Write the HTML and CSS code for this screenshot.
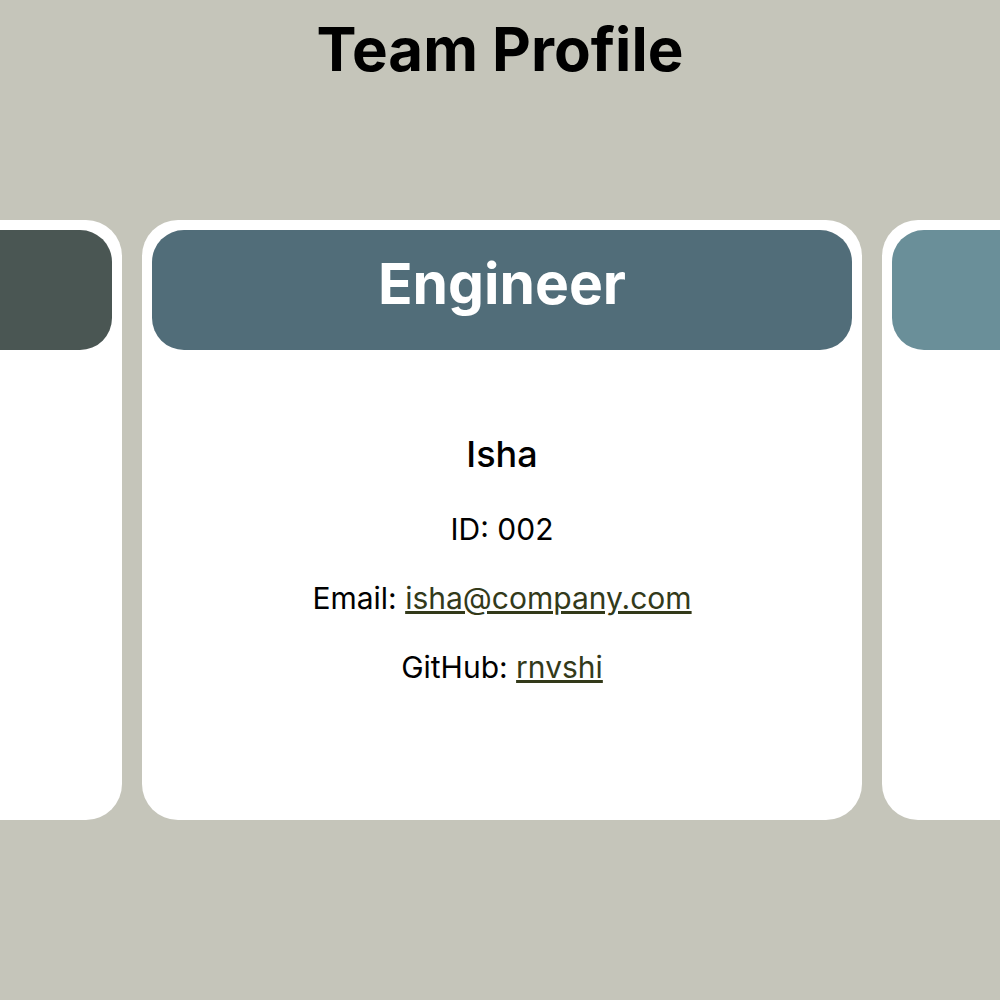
FILE: index.html
```html
<!DOCTYPE html>
<html lang="en">
<head>
<meta charset="utf-8">
<title>Team Profile</title>
<link rel="stylesheet" href="styles.css">
</head>
<body>
<h1 class="page-title">Team Profile</h1>
<div class="carousel">
  <div class="card">
    <div class="card-head head-manager"></div>
    <div class="card-body"></div>
  </div>
  <div class="card">
    <div class="card-head head-engineer"><h2 class="role">Engineer</h2></div>
    <div class="card-body">
      <h3 class="name">Isha</h3>
      <p class="line">ID: 002</p>
      <p class="line">Email: <a href="mailto:isha@company.com">isha@company.com</a></p>
      <p class="line">GitHub: <a href="#">rnvshi</a></p>
    </div>
  </div>
  <div class="card">
    <div class="card-head head-intern"></div>
    <div class="card-body"></div>
  </div>
</div>
</body>
</html>
```
FILE: styles.css
```css
html, body {
  margin: 0;
  padding: 0;
}
body {
  background: #c5c5ba;
  font-family: Inter, "Noto Sans", sans-serif;
  color: #000;
  overflow: hidden;
}
.page-title {
  margin: 0;
  padding-top: 14px;
  text-align: center;
  font-size: 60px;
  font-weight: 700;
  line-height: 70px;
}
.carousel {
  display: flex;
  justify-content: center;
  gap: 20px;
  margin-top: 136px;
  padding-left: 4px;
}
.card {
  flex: 0 0 720px;
  height: 600px;
  box-sizing: border-box;
  padding: 10px;
  background: #fff;
  border-radius: 36px;
  display: flex;
  flex-direction: column;
}
.card-head {
  height: 120px;
  box-sizing: border-box;
  padding-bottom: 12px;
  border-radius: 32px;
  display: flex;
  align-items: center;
  justify-content: center;
}
.head-manager { background: #4a5653; }
.head-engineer { background: #516d79; }
.head-intern { background: #6a8f99; }
.role {
  margin: 0;
  color: #fff;
  font-size: 57px;
  font-weight: 700;
  line-height: 68px;
}
.card-body {
  display: flex;
  flex-direction: column;
  align-items: center;
  padding-top: 82px;
}
.name {
  margin: 0 0 35px;
  font-size: 36px;
  font-weight: 500;
  line-height: 44px;
}
.line {
  margin: 0 0 33px;
  font-size: 30px;
  line-height: 36px;
}
.line a {
  color: #333a1a;
}
```
